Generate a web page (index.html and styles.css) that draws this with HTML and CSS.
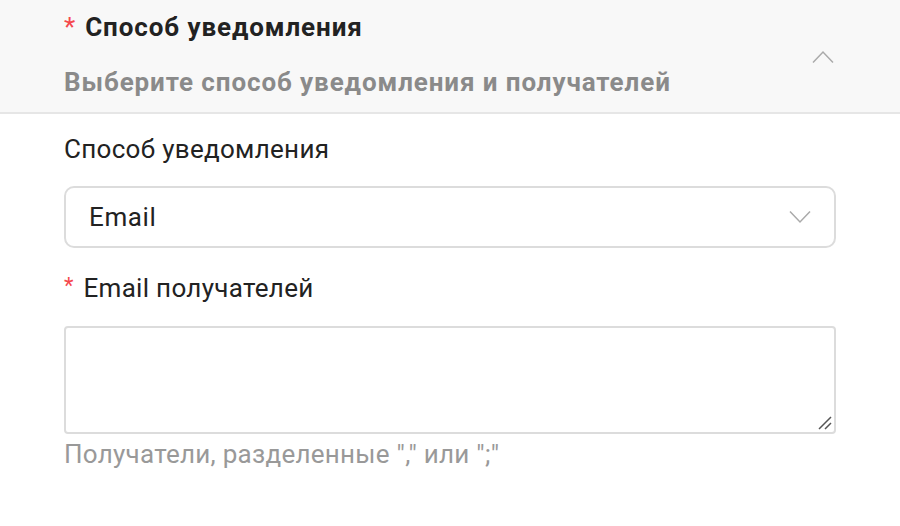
FILE: index.html
```html
<!DOCTYPE html>
<html lang="ru">
<head>
<meta charset="utf-8">
<link rel="stylesheet" href="styles.css">
</head>
<body>
<div class="panel">
  <div class="head">
    <div class="head-text">
      <div class="title"><span class="req">*</span>Способ уведомления</div>
      <div class="subtitle">Выберите способ уведомления и получателей</div>
    </div>
    <svg class="chev-up" width="22" height="14" viewBox="0 0 22 14"><path d="M1 12.5 L11 2 L21 12.5" fill="none" stroke="#aaa" stroke-width="1.5"/></svg>
  </div>
  <div class="body">
    <div class="label">Способ уведомления</div>
    <div class="select">
      <span>Email</span>
      <svg width="22" height="14" viewBox="0 0 22 14"><path d="M1 1.5 L11 12 L21 1.5" fill="none" stroke="#aaa" stroke-width="1.5"/></svg>
    </div>
    <div class="label label2"><span class="req small">*</span>Email получателей</div>
    <div class="textarea">
      <svg class="grip" width="14" height="14" viewBox="0 0 14 14"><path d="M1 13 L13 1 M7 13 L13 7" stroke="#555" stroke-width="1.5"/></svg>
    </div>
    <div class="hint">Получатели, разделенные "," или ";"</div>
  </div>
</div>
</body>
</html>
```
FILE: styles.css
```css
html, body { margin: 0; padding: 0; background: #fff; }
body { font-family: Roboto, "Noto Sans", sans-serif; width: 900px; height: 526px; overflow: hidden; }
.head {
  background: #f8f8f8;
  border-bottom: 2px solid #e6e6e6;
  height: 114px;
  box-sizing: border-box;
  padding: 0 64px 0 64px;
  display: flex;
  justify-content: space-between;
  align-items: center;
}
.head-text { display: flex; flex-direction: column; margin-top: -4px; }
.title { font-size: 26px; font-weight: 700; color: #222; line-height: 30px; letter-spacing: 0.9px; }
.req { color: #f5484d; margin-right: 10px; font-weight: 400; letter-spacing: 0; }
.req.small { font-size: 22px; margin-right: 10px; position: relative; top: -4px; }
.subtitle { font-size: 26px; font-weight: 700; color: #8a8a8a; line-height: 30px; letter-spacing: 0.9px; margin-top: 25px; }
.chev-up { margin-right: 2px; margin-top: 2px; }
.body { padding: 20px 64px 0; }
.label { font-size: 26px; color: #222; line-height: 30px; letter-spacing: 0.3px; }
.select {
  margin-top: 22px;
  height: 62px;
  box-sizing: border-box;
  border: 2px solid #dcdcdc;
  border-radius: 10px;
  display: flex;
  align-items: center;
  justify-content: space-between;
  padding: 0 23px 0 23px;
  font-size: 26px;
  letter-spacing: 0.6px;
  color: #222;
}
.label2 { margin-top: 25px; }
.textarea {
  margin-top: 21px;
  height: 108px;
  box-sizing: border-box;
  border: 2px solid #dcdcdc;
  border-radius: 4px;
  display: flex;
  justify-content: flex-end;
  align-items: flex-end;
  padding: 0 2px 2px 0;
}
.hint { font-size: 26px; color: #999; line-height: 30px; letter-spacing: 0.27px; margin-top: 5px; }
```
